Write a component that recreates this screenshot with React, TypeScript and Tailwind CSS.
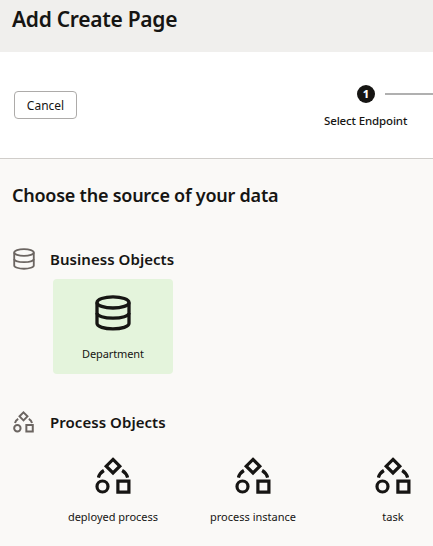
type IconProps = { className: string; strokeWidth?: number };

function DatabaseIcon({ className, strokeWidth = 3.3 }: IconProps) {
  return (
    <svg viewBox="0 0 36 36" className={className} fill="none" stroke="currentColor" strokeWidth={strokeWidth}>
      <ellipse cx="18" cy="7.4" rx="16" ry="5.6" />
      <path d="M2 7.4V28.5C2 31.5 9.2 33.9 18 33.9s16-2.4 16-5.4V7.4" />
      <path d="M2 18c0 3 7.2 5.2 16 5.2S34 21 34 18" />
    </svg>
  );
}

function ProcessIcon({ className, strokeWidth = 3.2 }: IconProps) {
  return (
    <svg viewBox="0 0 36 36" className={className} fill="none" stroke="currentColor" strokeWidth={strokeWidth}>
      <path d="M18 2.4 24.8 9.2 18 16 11.2 9.2Z" />
      <circle cx="7.5" cy="29.5" r="5.5" />
      <path d="M22.9 24.1h11v11h-11Z" />
      <path d="M3.4 20.7c.8-3.2 2.700-5.600 5.500-7.200M32.600 20.700c-.8-3.200-2.700-5.600-5.500-7.200" />
    </svg>
  );
}

function ProcessTile({ label }: { label: string }) {
  return (
    <div className="flex h-[95px] w-[120px] shrink-0 flex-col items-center pt-[15px]">
      <ProcessIcon className="size-9 overflow-visible" />
      <span className="mt-[15px] text-[11px] leading-[18px] whitespace-nowrap">{label}</span>
    </div>
  );
}

export default function App() {
  return (
    <div className="flex h-[546px] w-[433px] flex-col overflow-hidden bg-[#faf9f7] font-['Noto_Sans',sans-serif] text-[#161513]">
      <header className="h-[52px] shrink-0 bg-[#f0efed] pl-3 pt-[3px]">
        <h1 className="text-[21px] leading-[32px] font-semibold tracking-[-0.28px] whitespace-nowrap">Add Create Page</h1>
      </header>
      <div className="flex h-[107px] shrink-0 border-b border-[#d0cdca] bg-white">
        <button className="mt-[39px] ml-[14px] h-[28px] w-[63px] rounded-[4px] border border-[#adaba9] pt-px text-[12px] leading-[26px]">Cancel</button>
        <div className="mt-[33px] ml-auto flex w-[109px] flex-col">
          <div className="flex items-center">
            <span className="ml-[33px] flex size-[18px] items-center justify-center rounded-full bg-[#161513] text-[11px] font-extrabold text-white">1</span>
            <span className="ml-[10px] h-[2px] flex-1 bg-[#b0b0b0]" />
          </div>
          <span className="mt-[9px] text-[11.5px] leading-[18px] font-medium tracking-[-0.14px] whitespace-nowrap">Select Endpoint</span>
        </div>
      </div>
      <main className="flex flex-col">
        <h2 className="mt-[22px] ml-3 h-[28px] text-[18px] leading-[28px] font-semibold tracking-[-0.24px] whitespace-nowrap">Choose the source of your data</h2>
        <section>
          <div className="mt-[38px] ml-[13px] flex h-6 items-center">
            <DatabaseIcon className="size-[22px] text-[#6b6561]" strokeWidth={3} />
            <h3 className="ml-[15px] text-[15px] leading-[22px] font-semibold tracking-[0.05px] whitespace-nowrap">Business Objects</h3>
          </div>
          <div className="mt-2 ml-[53px] flex h-[95px] w-[120px] flex-col items-center rounded-[4px] bg-[#e4f4dc] pt-4">
            <DatabaseIcon className="size-9" />
            <span className="mt-[14px] text-[11px] leading-[18px] tracking-[-0.01em]">Department</span>
          </div>
        </section>
        <section>
          <div className="mt-[36px] ml-[13px] flex h-6 items-center">
            <ProcessIcon className="mb-px size-[21px] overflow-visible text-[#6b6561]" strokeWidth={3.4} />
            <h3 className="ml-4 text-[15px] leading-[22px] font-semibold tracking-[0.05px] whitespace-nowrap">Process Objects</h3>
          </div>
          <div className="mt-2 ml-[53px] flex gap-5">
            <ProcessTile label="deployed process" />
            <ProcessTile label="process instance" />
            <ProcessTile label="task" />
          </div>
        </section>
      </main>
    </div>
  );
}
